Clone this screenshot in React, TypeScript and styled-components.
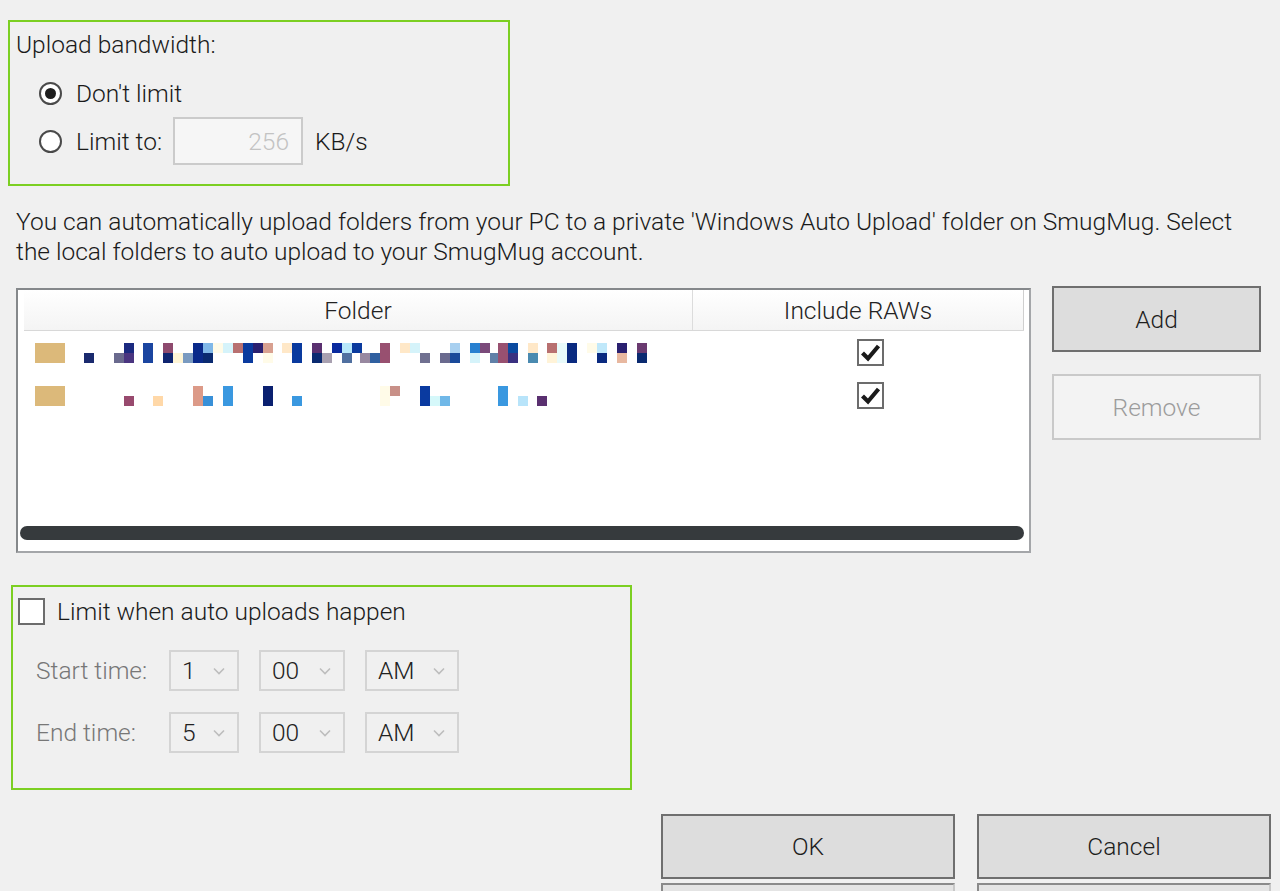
import React from "react";
import styled, { createGlobalStyle } from "styled-components";

const GlobalStyle = createGlobalStyle`
  html, body {
    margin: 0;
    padding: 0;
    background: #f0f0f0;
    overflow: hidden;
  }
  body {
    font-family: Roboto, "Noto Sans", "Liberation Sans", sans-serif;
    font-size: 24.5px;
    font-weight: 300;
    color: #1a1a1a;
  }
`;

const GREEN = "#7ccf22";

const Page = styled.div`
  display: flex;
  flex-direction: column;
  padding-top: 20px;
  width: 1280px;
  height: 891px;
  box-sizing: border-box;
  & > * {
    flex-shrink: 0;
  }
`;

const GroupBox = styled.div<{ $left: number; $width: number; $height: number; $top?: number }>`
  margin-left: ${(p) => p.$left}px;
  margin-top: ${(p) => p.$top ?? 0}px;
  width: ${(p) => p.$width}px;
  height: ${(p) => p.$height}px;
  box-sizing: border-box;
  border: 2px solid ${GREEN};
  display: flex;
  flex-direction: column;
`;

const BoxTitle = styled.div`
  padding: 9px 0 0 6px;
  line-height: 28px;
`;

const OptionList = styled.div`
  display: flex;
  flex-direction: column;
  padding-left: 29px;
  margin-top: 10px;
`;

const OptionRow = styled.label`
  display: flex;
  align-items: center;
  height: 48px;
`;

const Radio = styled.span<{ $checked?: boolean }>`
  width: 23px;
  height: 23px;
  box-sizing: border-box;
  border-radius: 50%;
  border: 2px solid #4a4a4a;
  background: #fff;
  margin-right: 14px;
  display: flex;
  align-items: center;
  justify-content: center;
  &::after {
    content: "";
    display: ${(p) => (p.$checked ? "block" : "none")};
    width: 11px;
    height: 11px;
    border-radius: 50%;
    background: #1e1e1e;
  }
`;

const NumberField = styled.div`
  width: 130px;
  height: 48px;
  box-sizing: border-box;
  margin: 0 12px 0 11px;
  border: 2px solid #cbcbcb;
  background: #f6f6f6;
  color: #c3c3c3;
  display: flex;
  align-items: center;
  justify-content: flex-end;
  padding-right: 12px;
`;

const Description = styled.p`
  margin: 21px 0 0 16px;
  width: 1250px;
  line-height: 30px;
`;

const FolderSection = styled.div`
  display: flex;
  align-items: flex-start;
  margin: 21px 0 0 16px;
  gap: 21px;
`;

const TableFrame = styled.div`
  width: 1015px;
  height: 265px;
  box-sizing: border-box;
  background: #fff;
  border: 2px solid #a4a6a9;
  border-top-color: #85888b;
  border-left-color: #85888b;
  display: flex;
  flex-direction: column;
`;

const GridRow = styled.div`
  display: grid;
  grid-template-columns: 668px 1px 330px 1px;
  margin-left: 6px;
  width: 1000px;
`;

const HeaderRow = styled(GridRow)`
  height: 40px;
  background: linear-gradient(#ffffff, #f4f4f4);
  border-bottom: 1px solid #d8d8d8;
`;

const HeaderCell = styled.div`
  display: flex;
  align-items: center;
  justify-content: center;
  color: #222;
`;

const GridLine = styled.div<{ $color?: string }>`
  background: ${(p) => p.$color ?? "#dcdcdc"};
`;

const Rows = styled.div`
  flex: 1;
`;

const BodyRow = styled(GridRow)`
  height: 43px;
`;

const NameCell = styled.div`
  display: flex;
  align-items: center;
  padding-left: 11px;
`;

const CheckCell = styled.div`
  grid-column: 3;
  display: flex;
  align-items: center;
  padding-left: 164px;
`;

const CheckBox = styled.span`
  width: 27px;
  height: 27px;
  box-sizing: border-box;
  border: 2px solid #6c6c6c;
  background: #fff;
  display: flex;
  align-items: center;
  justify-content: center;
  flex-shrink: 0;
`;

const ScrollBar = styled.div`
  height: 14px;
  margin: 0 5px 11px 2px;
  border-radius: 7px;
  background: #363a3d;
`;

const SideButtons = styled.div`
  display: flex;
  flex-direction: column;
  gap: 22px;
  margin-top: -2px;
`;

const Button = styled.button<{ $disabled?: boolean; $width: number }>`
  width: ${(p) => p.$width}px;
  height: 66px;
  box-sizing: border-box;
  font: inherit;
  background: ${(p) => (p.$disabled ? "#f3f3f3" : "#dddddd")};
  color: ${(p) => (p.$disabled ? "#9c9c9c" : "#1e1e1e")};
  border: 2px solid ${(p) => (p.$disabled ? "#c9c9c9" : "#6f6f6f")};
  padding: 0;
  cursor: pointer;
`;

const CheckLine = styled.label`
  display: flex;
  align-items: center;
  gap: 12px;
  padding: 10px 0 0 5px;
`;

const TimeGrid = styled.div`
  display: flex;
  flex-direction: column;
  gap: 21px;
  margin: 24px 0 0 23px;
`;

const TimeRow = styled.div`
  display: flex;
  align-items: center;
`;

const TimeLabel = styled.span`
  width: 133px;
  color: #777;
`;

const Select = styled.div<{ $width: number }>`
  width: ${(p) => p.$width}px;
  height: 41px;
  box-sizing: border-box;
  margin-right: 20px;
  border: 2px solid #d4d4d4;
  background: #f0f0f0;
  display: flex;
  align-items: center;
  justify-content: space-between;
  padding: 0 12px 0 11px;
  color: #222;
`;

const Footer = styled.div`
  display: flex;
  justify-content: flex-end;
  gap: 22px;
  margin: 24px 9px 0 0;
`;

const FooterButton = styled(Button)`
  height: 65px;
`;

const GhostRow = styled.div`
  display: flex;
  justify-content: flex-end;
  gap: 22px;
  margin: 4px 9px 0 0;
`;

const GhostButton = styled.div`
  width: 294px;
  height: 40px;
  box-sizing: border-box;
  border: 2px solid #8a8a8a;
  border-right-color: #c8c8c8;
  background: #e4e4e4;
`;

type Block = [number, "t" | "b" | "f", string];

const rowOne: Block[] = [
  [84, "b", "#1a2a6e"], [114, "b", "#6a6a8e"], [124, "t", "#1b2a80"], [124, "b", "#4a3580"],
  [143, "f", "#1b45a0"], [163, "t", "#8e4a6e"], [163, "b", "#0f2470"], [173, "b", "#fff5d5"],
  [183, "b", "#7a9ac0"], [193, "f", "#0a2a8a"], [203, "t", "#80b8e8"], [203, "b", "#0a2a70"],
  [213, "t", "#fffbe8"], [223, "t", "#d5f3fa"], [233, "t", "#b87070"], [243, "f", "#0a3a9e"],
  [253, "t", "#2a2070"], [263, "t", "#d8a090"], [263, "b", "#fffbe8"], [282, "t", "#ffe8c8"],
  [292, "f", "#0a3a9e"], [312, "t", "#5a3070"], [312, "b", "#0a2a70"], [322, "b", "#a8a0b0"],
  [332, "t", "#0a2a9e"], [342, "t", "#b8e8fa"], [342, "b", "#5070a0"], [352, "t", "#0a3a9e"],
  [360, "b", "#9888a0"], [370, "b", "#3060a0"], [380, "f", "#985070"], [400, "t", "#ffe8c8"],
  [410, "t", "#d5f3fa"], [420, "b", "#707090"], [440, "b", "#6a6a8e"], [450, "t", "#a8d0f0"],
  [450, "b", "#1a4a9a"], [470, "t", "#2880d0"], [470, "b", "#d5f3fa"], [480, "t", "#7a4a7a"],
  [490, "b", "#6080a8"], [498, "f", "#985070"], [508, "t", "#0a4aa0"], [508, "b", "#3a3080"],
  [528, "t", "#ffe8c8"], [528, "b", "#4a8ab0"], [547, "t", "#b87070"], [547, "b", "#fff3d8"],
  [557, "f", "#e8fafa"], [567, "f", "#0a2a80"], [587, "t", "#fffbe8"], [597, "t", "#c0e8fa"],
  [597, "b", "#0a2a80"], [617, "t", "#2a2070"], [617, "b", "#e8b8a0"], [637, "t", "#6a3a70"],
  [637, "b", "#0a2a70"],
];

const rowTwo: Block[] = [
  [124, "b", "#984a6e"], [153, "b", "#ffd8a8"], [193, "f", "#dc9a88"], [203, "b", "#3890d8"],
  [223, "f", "#3a98e0"], [263, "f", "#0a2070"], [292, "b", "#3a98e0"], [380, "f", "#fffbe8"],
  [390, "t", "#c89088"], [420, "f", "#0a3aa0"], [430, "b", "#d5f8fa"], [440, "b", "#70b8e8"],
  [498, "f", "#3a98e0"], [518, "b", "#b8e4fa"], [537, "b", "#5a3070"],
];

// blurred folder names, drawn as the mosaic they are in the picture
function BlurredName({ blocks }: { blocks: Block[] }) {
  return (
    <svg width="620" height="20" viewBox="0 0 620 20">
      <rect x="0" y="0" width="30" height="20" fill="#dcb97a" />
      {blocks.map(([x, part, color], i) => (
        <rect
          key={i}
          x={x - 35}
          y={part === "b" ? 10 : 0}
          width="10"
          height={part === "f" ? 20 : 10}
          fill={color}
        />
      ))}
    </svg>
  );
}

function Tick() {
  return (
    <svg width="21" height="19" viewBox="0 0 21 19">
      <path d="M2.5 10 L8 15.5 L18.5 3" fill="none" stroke="#1a1a1a" strokeWidth="4.2" strokeLinejoin="miter" />
    </svg>
  );
}

function Chevron() {
  return (
    <svg width="12" height="8" viewBox="0 0 12 8">
      <path d="M1 1.5 L6 6.5 L11 1.5" fill="none" stroke="#bdbdbd" strokeWidth="1.6" />
    </svg>
  );
}

function TimePicker({ label, hour }: { label: string; hour: string }) {
  return (
    <TimeRow>
      <TimeLabel>{label}</TimeLabel>
      <Select $width={70}>
        <span>{hour}</span>
        <Chevron />
      </Select>
      <Select $width={86}>
        <span>00</span>
        <Chevron />
      </Select>
      <Select $width={94}>
        <span>AM</span>
        <Chevron />
      </Select>
    </TimeRow>
  );
}

export default function App() {
  const folders = [rowOne, rowTwo];

  return (
    <>
      <GlobalStyle />
      <Page>
        <GroupBox $left={8} $width={502} $height={166}>
          <BoxTitle>Upload bandwidth:</BoxTitle>
          <OptionList>
            <OptionRow>
              <Radio $checked />
              Don't limit
            </OptionRow>
            <OptionRow>
              <Radio />
              Limit to:
              <NumberField>256</NumberField>
              KB/s
            </OptionRow>
          </OptionList>
        </GroupBox>

        <Description>
          You can automatically upload folders from your PC to a private 'Windows Auto Upload' folder on
          SmugMug. Select the local folders to auto upload to your SmugMug account.
        </Description>

        <FolderSection>
          <TableFrame>
            <HeaderRow>
              <HeaderCell>Folder</HeaderCell>
              <GridLine />
              <HeaderCell>Include RAWs</HeaderCell>
              <GridLine $color="#cfcfcf" />
            </HeaderRow>
            <Rows>
              {folders.map((blocks, i) => (
                <BodyRow key={i}>
                  <NameCell>
                    <BlurredName blocks={blocks} />
                  </NameCell>
                  <CheckCell>
                    <CheckBox>
                      <Tick />
                    </CheckBox>
                  </CheckCell>
                </BodyRow>
              ))}
            </Rows>
            <ScrollBar />
          </TableFrame>
          <SideButtons>
            <Button $width={209}>Add</Button>
            <Button $width={209} $disabled>
              Remove
            </Button>
          </SideButtons>
        </FolderSection>

        <GroupBox $left={11} $width={621} $height={205} $top={32}>
          <CheckLine>
            <CheckBox />
            Limit when auto uploads happen
          </CheckLine>
          <TimeGrid>
            <TimePicker label="Start time:" hour="1" />
            <TimePicker label="End time:" hour="5" />
          </TimeGrid>
        </GroupBox>

        <Footer>
          <FooterButton $width={294}>OK</FooterButton>
          <FooterButton $width={294}>Cancel</FooterButton>
        </Footer>
        <GhostRow>
          <GhostButton />
          <GhostButton />
        </GhostRow>
      </Page>
    </>
  );
}
